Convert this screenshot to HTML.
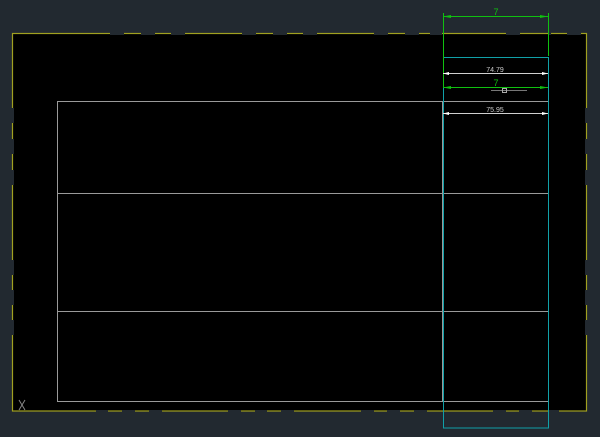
<!DOCTYPE html>
<html><head><style>
html,body{margin:0;padding:0;background:#222930;width:600px;height:437px;overflow:hidden}
svg{display:block}
</style></head><body>
<svg width="600" height="437" xmlns="http://www.w3.org/2000/svg" font-family="Liberation Sans, sans-serif">
<rect width="600" height="437" fill="#222930"/>
<rect x="12" y="33" width="575" height="378" fill="#000"/>
<g stroke="#a0a020" stroke-width="1.2" fill="none">
<rect x="12.5" y="33.5" width="574" height="377.5"/>
</g>
<g fill="#222930">
<!-- top gaps -->
<rect x="110" y="32" width="14" height="3"/><rect x="141" y="32" width="14" height="3"/><rect x="171" y="32" width="14" height="3"/>
<rect x="242" y="32" width="14" height="3"/><rect x="273" y="32" width="14" height="3"/><rect x="303" y="32" width="14" height="3"/>
<rect x="374" y="32" width="14" height="3"/><rect x="405" y="32" width="14" height="3"/><rect x="430" y="32" width="12" height="3"/>
<rect x="506" y="32" width="14" height="3"/><rect x="549" y="32" width="2" height="3"/><rect x="567" y="32" width="14" height="3"/>
<!-- bottom gaps -->
<rect x="96" y="410" width="12" height="3"/><rect x="122" y="410" width="13" height="3"/><rect x="149" y="410" width="13" height="3"/>
<rect x="228" y="410" width="13" height="3"/><rect x="255" y="410" width="12" height="3"/><rect x="281" y="410" width="13" height="3"/>
<rect x="361" y="410" width="13" height="3"/><rect x="387" y="410" width="13" height="3"/><rect x="414" y="410" width="13" height="3"/>
<rect x="493" y="410" width="13" height="3"/><rect x="519" y="410" width="13" height="3"/><rect x="549" y="410" width="10" height="3"/>
<!-- side gaps -->
<rect x="11" y="108" width="3" height="15"/><rect x="11" y="139" width="3" height="15"/><rect x="11" y="170" width="3" height="15"/>
<rect x="11" y="260" width="3" height="15"/><rect x="11" y="290" width="3" height="15"/><rect x="11" y="320" width="3" height="15"/>
<rect x="585" y="108" width="3" height="15"/><rect x="585" y="139" width="3" height="15"/><rect x="585" y="170" width="3" height="15"/>
<rect x="585" y="260" width="3" height="15"/><rect x="585" y="290" width="3" height="15"/><rect x="585" y="320" width="3" height="15"/>
</g>
<!-- white drawing -->
<g stroke="#9a9a9a" stroke-width="1" fill="none">
<rect x="57.5" y="101.5" width="491" height="300"/>
<line x1="57" y1="193.5" x2="548" y2="193.5"/>
<line x1="57" y1="311.5" x2="548" y2="311.5"/>
<line x1="442.5" y1="101" x2="442.5" y2="401"/>
<line x1="491" y1="90.5" x2="527" y2="90.5" stroke="#777"/>
<rect x="502.5" y="88.5" width="4" height="4" stroke="#aaa"/>
<path d="M19 400 L25 410 M25 400 L19 410" stroke="#888"/>
</g>
<!-- cyan -->
<rect x="443.5" y="57.5" width="105" height="370.5" stroke="#10a0a8" fill="none" stroke-width="1"/>
<!-- green -->
<g stroke="#10c010" stroke-width="1" fill="none">
<line x1="443.5" y1="13" x2="443.5" y2="88"/>
<line x1="548.5" y1="13" x2="548.5" y2="56"/>
<line x1="443" y1="16.5" x2="548" y2="16.5"/>
<line x1="443" y1="87.5" x2="548" y2="87.5"/>
</g>
<g fill="#10c010">
<path d="M443 16.5 L451 15 L451 18Z M548 16.5 L540 15 L540 18Z M443 87.5 L451 86 L451 89Z M548 87.5 L540 86 L540 89Z"/>
<text x="496" y="15" font-size="9" text-anchor="middle">7</text>
<text x="496" y="86" font-size="9" text-anchor="middle">7</text>
</g>
<!-- white dims -->
<g stroke="#d0d0d0" stroke-width="1">
<line x1="443" y1="73.5" x2="548" y2="73.5"/>
<line x1="443" y1="113.5" x2="548" y2="113.5"/>
</g>
<g fill="#fff">
<path d="M443 73.5 L449 72 L449 75Z M548 73.5 L542 72 L542 75Z M443 113.5 L449 112 L449 115Z M548 113.5 L542 112 L542 115Z"/>
<text x="495" y="72" font-size="7" text-anchor="middle" fill="#ccc">74.79</text>
<text x="495" y="112" font-size="7" text-anchor="middle" fill="#ccc">75.95</text>
</g>
</svg>
</body></html>
